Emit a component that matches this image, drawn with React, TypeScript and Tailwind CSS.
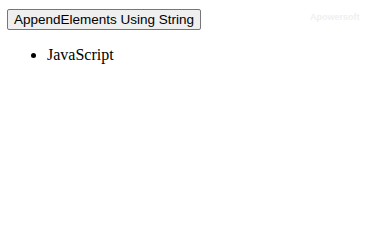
import React from "react";

export default function App() {
  return (
    <div className="relative w-[368px] h-[228px] bg-white">
      <div className="pt-[6px] pl-[7px]">
        <button className="h-[21px] px-[6px] border border-[#767676] rounded-[2px] bg-[#efefef] text-black text-[13.5px] leading-none font-['Liberation_Sans',Arial,sans-serif]">
          AppendElements Using String
        </button>
        <ul className="list-disc pl-[40px] mt-[16px] text-[16px] leading-[18px] text-black font-['Liberation_Serif','Times_New_Roman',serif]">
          <li>JavaScript</li>
        </ul>
      </div>
      <div className="absolute left-[310px] top-[11px] text-[9px] font-bold text-[#f0f0f0] font-['Liberation_Sans',Arial,sans-serif]">
        Apowersoft
      </div>
    </div>
  );
}
